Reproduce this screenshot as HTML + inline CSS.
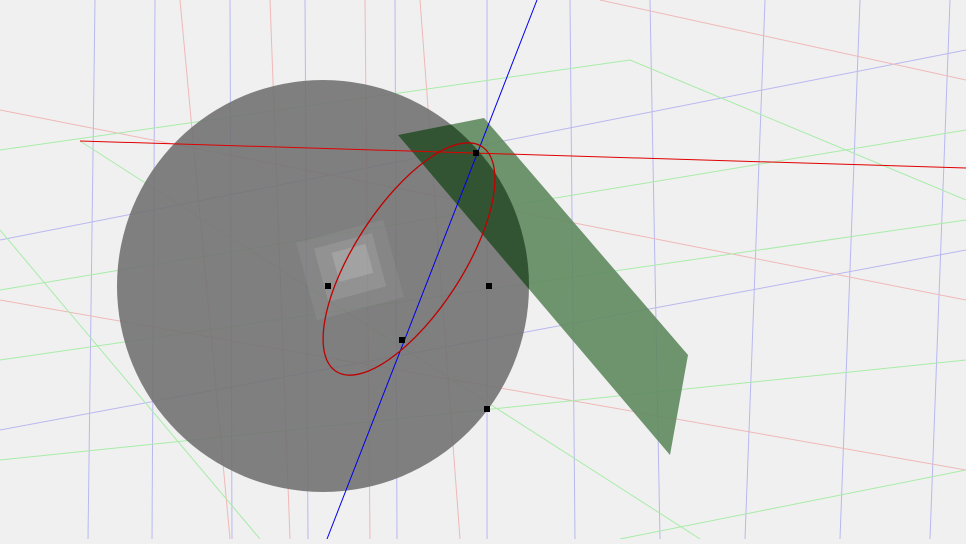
<!DOCTYPE html>
<html><head><style>html,body{margin:0;padding:0;background:#f0f0f0;overflow:hidden}</style></head>
<body>
<svg width="966" height="539" viewBox="0 0 966 539" xmlns="http://www.w3.org/2000/svg">
<rect width="966" height="539" fill="#f0f0f0"/>
<g stroke="#b8b8f0" stroke-width="1" fill="none">
<line x1="95" y1="0" x2="88" y2="539"/>
<line x1="155" y1="0" x2="152" y2="539"/>
<line x1="230" y1="0" x2="232" y2="539"/>
<line x1="305" y1="0" x2="308" y2="539"/>
<line x1="395" y1="0" x2="397" y2="539"/>
<line x1="487" y1="0" x2="487" y2="539"/>
<line x1="570" y1="0" x2="575" y2="539"/>
<line x1="650" y1="0" x2="660" y2="539"/>
<line x1="765" y1="0" x2="745" y2="539"/>
<line x1="860" y1="0" x2="840" y2="539"/>
<line x1="950" y1="0" x2="930" y2="539"/>
<line x1="0" y1="240" x2="966" y2="50"/>
<line x1="0" y1="430" x2="966" y2="250"/>
</g>
<g stroke="#f0b8b8" stroke-width="1" fill="none">
<line x1="180" y1="0" x2="230" y2="539"/>
<line x1="270" y1="0" x2="290" y2="539"/>
<line x1="365" y1="0" x2="370" y2="539"/>
<line x1="420" y1="0" x2="460" y2="539"/>
<line x1="600" y1="0" x2="966" y2="80"/>
<line x1="0" y1="300" x2="966" y2="470"/>
<line x1="0" y1="110" x2="966" y2="300"/>
</g>
<g stroke="#a8eca8" stroke-width="1" fill="none">
<line x1="0" y1="150" x2="630" y2="60"/>
<line x1="0" y1="290" x2="966" y2="130"/>
<line x1="0" y1="360" x2="966" y2="220"/>
<line x1="0" y1="460" x2="966" y2="360"/>
<line x1="620" y1="539" x2="966" y2="470"/>
<line x1="0" y1="230" x2="260" y2="539"/>
<line x1="630" y1="60" x2="966" y2="200"/>
<line x1="80" y1="141" x2="700" y2="539"/>
</g>
<circle cx="323" cy="286" r="206" fill="#727272" fill-opacity="0.9"/>
<g fill="#ffffff">
<rect x="305" y="230" width="90" height="80" fill-opacity="0.06" transform="rotate(-15 350 270)"/>
<rect x="320" y="240" width="60" height="55" fill-opacity="0.1" transform="rotate(-15 350 267)"/>
<rect x="335" y="248" width="35" height="30" fill-opacity="0.15" transform="rotate(-15 352 263)"/>
</g>
<polygon points="398,135 484,118 688,355 670,455" fill="#5f8a5f" fill-opacity="0.9"/>
<clipPath id="c"><circle cx="323" cy="286" r="206"/></clipPath>
<polygon points="398,135 484,118 688,355 670,455" fill="#2f4f2f" fill-opacity="0.9" clip-path="url(#c)"/>
<line x1="80" y1="141" x2="966" y2="168" stroke="#e00000" stroke-width="1"/>
<line x1="537" y1="0" x2="327" y2="539" stroke="#0000ee" stroke-width="1"/>
<ellipse cx="409" cy="259" rx="134" ry="54" transform="rotate(-57 409 259)" fill="none" stroke="#c00000" stroke-width="1.3"/>
<g fill="#000">
<rect x="473" y="150" width="6" height="6"/>
<rect x="325" y="283" width="6" height="6"/>
<rect x="486" y="283" width="6" height="6"/>
<rect x="399" y="337" width="6" height="6"/>
<rect x="484" y="406" width="6" height="6"/>
</g>
</svg>
</body></html>
